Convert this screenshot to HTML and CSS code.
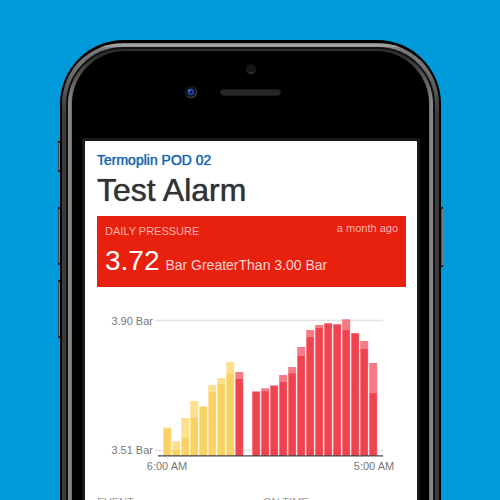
FILE: index.html
```html
<!DOCTYPE html>
<html lang="en">
<head>
<meta charset="utf-8">
<title>Test Alarm</title>
<link rel="stylesheet" href="styles.css">
</head>
<body>
<div class="stage">
  <div class="phone">
    <span class="key key-mute"></span>
    <span class="key key-up"></span>
    <span class="key key-down"></span>
    <span class="key key-power"></span>
    <div class="ring-outer"><div class="groove"><div class="ring-inner"><div class="face">
      <svg class="sensors" width="134" height="40" viewBox="0 0 134 40" aria-hidden="true">
        <defs>
          <linearGradient id="sensor" x1="0" y1="0" x2="0" y2="1">
            <stop offset="0.6" stop-color="#151515"/><stop offset="1" stop-color="#484848"/>
          </linearGradient>
          <linearGradient id="lens" x1="0" y1="0" x2="1" y2="1">
            <stop offset="0.3" stop-color="#161616"/><stop offset="1" stop-color="#4a4a4a"/>
          </linearGradient>
        </defs>
        <circle cx="67" cy="7" r="5" fill="url(#sensor)"/>
        <circle cx="67" cy="6.5" r="4.2" fill="#151515"/>
        <circle cx="7" cy="30" r="6.3" fill="url(#lens)"/>
        <circle cx="6.8" cy="29.8" r="5" fill="#0d0d12"/>
        <circle cx="6.8" cy="29.8" r="3.4" fill="#2347a0"/>
        <circle cx="7" cy="30" r="1.6" fill="#0a1a52"/>
        <circle cx="5.4" cy="28.6" r="1" fill="#5b83dc"/>
        <rect x="36.5" y="27.5" width="60" height="6" rx="3" fill="#272727" stroke="#1b1b1b"/>
      </svg>
      <main class="screen">
        <a class="device" href="#">Termoplin POD 02</a>
        <h1>Test Alarm</h1>
        <section class="alarm">
          <div class="alarm-head"><span>DAILY PRESSURE</span><time>a month ago</time></div>
          <p class="reading"><strong>3.72</strong> Bar GreaterThan 3.00 Bar</p>
        </section>
        <svg class="chart" viewBox="97 310 309 170" role="img" aria-label="Daily pressure">
          <path d="M155 320.5H383M155 450.5H383" stroke="#e3e3e3" stroke-width="1.4"/>
          <g class="warn-soft">
            <path d="M163.3 427.3h8V456h-8zM172.3 441.3h8V456h-8zM181.3 418h8V456h-8zM190.3 401h8V456h-8zM199.3 406.3h8V456h-8zM208.3 385h8V456h-8zM217.3 378h8V456h-8zM226.3 362h8V456h-8z"/>
          </g>
          <g class="warn">
            <path d="M163.8 429h7V456h-7zM172.8 449.5h7V456h-7zM181.8 438h7V456h-7zM190.8 418h7V456h-7zM199.8 407h7V456h-7zM208.8 392h7V456h-7zM217.8 384h7V456h-7zM226.8 373.3h7V456h-7z"/>
          </g>
          <g class="high-soft">
            <path d="M235.3 372h8V456h-8zM252.2 391.3h8V456h-8zM261.2 388.3h8V456h-8zM270.2 385.3h8V456h-8zM279.2 375h8V456h-8zM288.2 367h8V456h-8zM297.2 347h8V456h-8zM306.2 330h8V456h-8zM315.2 325h8V456h-8zM324.2 323h8V456h-8zM333.2 324h8V456h-8zM342.2 319.3h8V456h-8zM351.2 333h8V456h-8zM360.2 341h8V456h-8zM369.2 363h8V456h-8z"/>
          </g>
          <g class="high">
            <path d="M235.8 379h7V456h-7zM252.7 392h7V456h-7zM261.7 391.3h7V456h-7zM270.7 386.2h7V456h-7zM279.7 382h7V456h-7zM288.7 373.3h7V456h-7zM297.7 356h7V456h-7zM306.7 337h7V456h-7zM315.7 328h7V456h-7zM324.7 324h7V456h-7zM333.7 325h7V456h-7zM342.7 330h7V456h-7zM351.7 333.7h7V456h-7zM360.7 349h7V456h-7zM369.7 393.3h7V456h-7z"/>
          </g>
          <path d="M158 455.8H383" stroke="#454545" stroke-width="1.3"/>
          <path d="M167.5 456.5v2M373.5 456.5v2" stroke="#ddd"/>
          <g class="axis">
            <text x="153" y="325" text-anchor="end">3.90 Bar</text>
            <text x="153" y="454" text-anchor="end">3.51 Bar</text>
            <text x="167" y="470" text-anchor="middle">6:00 AM</text>
            <text x="374" y="470" text-anchor="middle">5:00 AM</text>
          </g>
        </svg>
        <div class="facts"><span>EVENT</span><span>ON TIME</span></div>
      </main>
    </div></div></div></div>
  </div>
</div>
</body>
</html>
```
FILE: styles.css
```css
* { box-sizing: border-box; }

body {
  margin: 0;
  background: #0099da;
  font-family: "Liberation Sans", Arial, sans-serif;
}

.stage {
  height: 100vh;
  overflow: hidden;
  padding: 40px 59px 0 60px;
}

/* Phone body: concentric metal bands around a black face */
.phone {
  position: relative;
  padding: 3px 2px;
  border-radius: 64px;
  background: #000;
}

.ring-outer {
  padding: 4px;
  border-radius: 61px;
  background: linear-gradient(#777, #aaa 2px, #777 6px, #777 20px, #3c3c3c 70px);
}

.groove {
  padding: 2px;
  border-radius: 57px;
  background: #111;
}

.ring-inner {
  padding: 2px 4px;
  border-radius: 55px;
  background: linear-gradient(#2e2e2e, #303030 8px, #888 50px);
}

.face {
  padding: 11px 12px 40px 13px;
  border-radius: 53px;
  background: #000;
  box-shadow: 0 0 2px #333;
}

.sensors {
  display: block;
  margin: 0 auto 39px;
}

.key {
  position: absolute;
  left: -2px;
  width: 2px;
  border: solid #222;
  border-width: 2px 0;
  background: linear-gradient(90deg, #333, #999);
}

.key-mute { top: 101px; height: 31px; }
.key-up { top: 167px; height: 58px; }
.key-down { top: 240px; height: 58px; }

.key-power {
  top: 167px;
  right: -2px;
  left: auto;
  height: 60px;
}

.screen {
  padding: 11px 11px 80px 12px;
  border-radius: 1px;
  background: #fff;
  box-shadow: 0 0 0 3px #191919;
}

.device {
  display: block;
  color: #1b64ad;
  font-size: 14px;
  line-height: 16px;
  text-decoration: none;
  text-shadow: 0 0 1px #1b64ad;
}

h1 {
  margin: 5px 0 8px;
  color: #333;
  font-size: 32px;
  font-weight: 400;
  line-height: 35px;
  text-shadow: 0 0 1px #333;
}

.alarm {
  padding: 5px 8px;
  background: #e8210f;
  color: #ffd0d0;
}

.alarm-head {
  display: flex;
  justify-content: space-between;
  font-size: 11px;
  line-height: 20px;
  color: #ffb0ae;
}

.alarm-head time { line-height: 14px; }

.reading {
  margin: 6px 0 0;
  font-size: 14px;
  line-height: 33px;
  white-space: nowrap;
}

.reading strong {
  margin-right: 2px;
  color: #fff;
  font-size: 28px;
  font-weight: 400;
  line-height: 28px;
}

.chart {
  display: block;
  width: 100%;
  margin-top: 23px;
}

.warn-soft { fill: #fce08e; }
.warn { fill: #f9d164; }
.high-soft { fill: #f57c86; }
.high { fill: #ef4350; }

.axis {
  fill: #777;
  font-size: 11px;
}

.facts {
  display: grid;
  grid-template-columns: 166px 1fr;
  margin-top: 15px;
  color: #999;
  font-size: 11px;
  line-height: 14px;
}
```
